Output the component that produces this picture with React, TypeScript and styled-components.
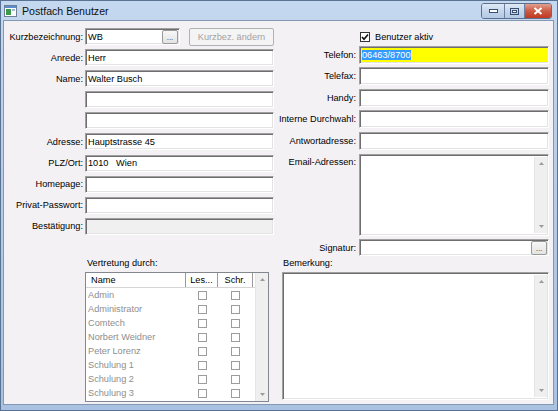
import styled, { createGlobalStyle, css } from "styled-components";

const GlobalStyle = createGlobalStyle`
  html, body { margin: 0; padding: 0; overflow: hidden; }
  body {
    font-family: "Liberation Sans", Arial, sans-serif;
    font-size: 9.2px;
    color: #000;
  }
  * { box-sizing: border-box; }
`

const sunken = css`
  border: 1px solid;
  border-color: #a0a0a0 #ffffff #ffffff #a0a0a0;
  box-shadow: inset 1px 1px 0 #6e6e6e, inset -1px -1px 0 #e3e3e3;
`

const Window = styled.div`
  width: 558px;
  height: 411px;
  display: flex;
  flex-direction: column;
  background: linear-gradient(#c4d8ef, #b7cde8 40%, #a9c2e2);
  border: 1px solid #5a7394;
`

const TitleBar = styled.div`
  height: 19px;
  display: flex;
  align-items: center;
  padding: 0 3px 0 3px;
`

const WinIcon = () => (
  <svg width="13" height="12" viewBox="0 0 13 12" style={{ marginRight: 5 }}>
    <rect x="0.5" y="0.5" width="12" height="11" fill="#fff" stroke="#6f7f95" />
    <rect x="1" y="1" width="11" height="2" fill="#5d8ccf" />
    <rect x="2" y="4" width="5" height="6" fill="#3c9a4a" />
    <rect x="8" y="4" width="3" height="2" fill="#9fb6d4" />
  </svg>
)

const Title = styled.span`
  font-size: 10.6px;
  color: #101010;
  flex: 1;
`

const CaptionGroup = styled.div`
  display: flex;
  align-self: flex-start;
  margin-top: 2px;
  margin-right: 2px;
  border: 1px solid #5c6f8c;
  border-radius: 3px;
  overflow: hidden;
`

const CaptionButton = styled.div<{ $w: number; $close?: boolean }>`
  width: ${(p) => p.$w}px;
  height: 14px;
  display: flex;
  align-items: center;
  justify-content: center;
  background: ${(p) =>
    p.$close
      ? "linear-gradient(#e3a08f, #cc5a44 50%, #c0391f)"
      : "linear-gradient(#dfe9f5, #c5d6ec 50%, #b3c8e4)"};
  & + & {
    border-left: 1px solid #6d819f;
  }
`

const Client = styled.div`
  flex: 1;
  margin: 0 3px 5px 2px;
  background: #f4f1f4;
  border: 1px solid #8498b3;
  display: grid;
  grid-template-columns: 274px 1fr;
  grid-template-rows: 236px 1fr;
`

const LeftForm = styled.div`
  padding-top: 7px;
  display: grid;
  grid-template-columns: 79px 189px;
  column-gap: 2px;
  grid-auto-rows: 17px;
  row-gap: 4.1px;
  align-items: center;
`

const RightForm = styled.div`
  padding-top: 6px;
  display: grid;
  grid-template-columns: 78px 190px;
  column-gap: 3px;
  grid-template-rows: 15px 18px 18px 18px 18px 18px 82px 17px;
  row-gap: 3.6px;
  align-items: center;
`

const Label = styled.div<{ $top?: boolean }>`
  text-align: right;
  white-space: nowrap;
  align-self: ${(p) => (p.$top ? "start" : "center")};
  padding-top: ${(p) => (p.$top ? "3px" : "0")};
`

const Field = styled.div<{ $bg?: string }>`
  ${sunken};
  height: 100%;
  background: ${(p) => p.$bg || "#fff"};
  display: flex;
  align-items: center;
  padding-left: 2px;
  white-space: pre;
  position: relative;
`

const Selected = styled.span`
  background: #3399ff;
  color: #fff;
`

const KurzRow = styled.div`
  display: flex;
  align-items: center;
  height: 100%;
  gap: 9px;
`

const KurzField = styled(Field)`
  width: 95px;
  flex: none;
  padding-right: 1px;
  justify-content: space-between;
`

const DotsButton = styled.div`
  width: 16px;
  height: 14px;
  border: 1px solid #9a9a9a;
  border-radius: 2px;
  background: linear-gradient(#f7f7f7, #e3e3e3);
  display: flex;
  align-items: flex-end;
  justify-content: center;
  font-size: 8px;
  line-height: 10px;
  color: #333;
`

const PushButton = styled.div`
  flex: 1;
  height: 18px;
  border: 1px solid #adb2b5;
  border-radius: 2px;
  background: #f4f4f4;
  color: #a3a3a3;
  display: flex;
  align-items: center;
  justify-content: center;
`

const CheckRow = styled.div`
  grid-column: 2;
  align-self: end;
  display: flex;
  align-items: center;
  gap: 5px;
  padding-left: 1px;
`

const CheckBox = styled.div<{ $light?: boolean }>`
  width: ${(p) => (p.$light ? 9 : 10)}px;
  height: ${(p) => (p.$light ? 9 : 10)}px;
  background: #fff;
  border: 1px solid ${(p) => (p.$light ? "#9c9c9c" : "#333")};
  display: flex;
  align-items: center;
  justify-content: center;
`

const Scroll = styled.div`
  width: 13px;
  align-self: stretch;
  background: #f0efef;
  border-left: 1px solid #e6e6e6;
  display: flex;
  flex-direction: column;
  justify-content: space-between;
  align-items: center;
  padding: 5px 0;
  flex: none;
`

const Arrow = ({ down }: { down?: boolean }) => (
  <svg width="5" height="3" viewBox="0 0 5 3">
    <path d={down ? "M0 0H5L2.5 3Z" : "M0 3H5L2.5 0Z"} fill="#9a9a9a" />
  </svg>
)

const ScrollBar = () => (
  <Scroll>
    <Arrow />
    <Arrow down />
  </Scroll>
)

const Memo = styled(Field)`
  align-items: stretch;
  justify-content: flex-end;
  padding: 2px 1px 2px 0;
`

const SigField = styled(Field)`
  justify-content: flex-end;
  padding-right: 1px;
`

const BottomCell = styled.div<{ $left: number; $width: number }>`
  padding-left: ${(p) => p.$left}px;
  display: flex;
  flex-direction: column;
  & > *:last-child {
    width: ${(p) => p.$width}px;
  }
`

const SectionLabel = styled.div<{ $indent: number }>`
  height: 15px;
  line-height: 13px;
  padding-left: ${(p) => p.$indent}px;
`

const ListView = styled.div`
  height: 130px;
  border: 1px solid #828790;
  background: #fff;
  display: flex;
`

const ListBody = styled.div`
  flex: 1;
  display: flex;
  flex-direction: column;
`

const ListRow = styled.div<{ $head?: boolean }>`
  height: 14px;
  display: grid;
  grid-template-columns: 100px 32px 35px 1fr;
  align-items: stretch;
  color: ${(p) => (p.$head ? "#000" : "#8e8e8e")};
  ${(p) =>
    p.$head &&
    css`
      height: 15px;
      border-bottom: 1px solid #d5d5d5;
      & > div:not(:last-child) {
        border-right: 1px solid #9a9a9a;
      }
    `}
`

const Cell = styled.div<{ $center?: boolean }>`
  display: flex;
  align-items: center;
  justify-content: ${(p) => (p.$center ? "center" : "flex-start")};
  padding-left: ${(p) => (p.$center ? "0" : "2px")};
  white-space: nowrap;
  overflow: hidden;
`

const HeadCell = styled(Cell)`
  padding-left: ${(p) => (p.$center ? "0" : "5px")};
`

const BigMemo = styled.div`
  ${sunken};
  height: 128px;
  background: #fff;
  display: flex;
  justify-content: flex-end;
  padding: 2px 1px 2px 0;
`

const leftRows: [string, string, string?][] = [
  ["Anrede:", "Herr"],
  ["Name:", "Walter Busch"],
  ["", ""],
  ["", ""],
  ["Adresse:", "Hauptstrasse 45"],
  ["PLZ/Ort:", "1010   Wien"],
  ["Homepage:", ""],
  ["Privat-Passwort:", ""],
  ["Bestätigung:", "", "#f1f0f1"],
]

const people = [
  "Admin",
  "Administrator",
  "Comtech",
  "Norbert Weidner",
  "Peter Lorenz",
  "Schulung 1",
  "Schulung 2",
  "Schulung 3",
]

const App = () => {
  return (
    <>
      <GlobalStyle />
      <Window>
        <TitleBar>
          <WinIcon />
          <Title>Postfach Benutzer</Title>
          <CaptionGroup>
            <CaptionButton $w={22}>
              <svg width="9" height="4"><rect x="0.5" y="0.5" width="8" height="3" fill="#fff" stroke="#3a4f6e" /></svg>
            </CaptionButton>
            <CaptionButton $w={20}>
              <svg width="9" height="7"><rect x="0.5" y="0.5" width="8" height="6" fill="none" stroke="#3a4f6e" /><rect x="2.5" y="2.5" width="4" height="2" fill="#fff" stroke="#3a4f6e" /></svg>
            </CaptionButton>
            <CaptionButton $w={27} $close>
              <svg width="10" height="8" viewBox="0 0 10 8">
                <path d="M1.5 1L8.5 7M8.5 1L1.5 7" stroke="#fff" strokeWidth="2" />
              </svg>
            </CaptionButton>
          </CaptionGroup>
        </TitleBar>
        <Client>
          <LeftForm>
            <Label>Kurzbezeichnung:</Label>
            <KurzRow>
              <KurzField>
                WB
                <DotsButton>...</DotsButton>
              </KurzField>
              <PushButton>Kurzbez. ändern</PushButton>
            </KurzRow>
            {leftRows.map(([label, value, bg], i) => [
              <Label key={`l${i}`}>{label}</Label>,
              <Field key={`f${i}`} $bg={bg}>{value}</Field>,
            ])}
          </LeftForm>
          <RightForm>
            <CheckRow>
              <CheckBox>
                <svg width="8" height="8" viewBox="0 0 8 8">
                  <path d="M1 4L3 6.3L7 1.5" fill="none" stroke="#111" strokeWidth="1.6" />
                </svg>
              </CheckBox>
              Benutzer aktiv
            </CheckRow>
            <Label>Telefon:</Label>
            <Field $bg="#ffff00">
              <Selected>06463/8700</Selected>
            </Field>
            <Label>Telefax:</Label>
            <Field />
            <Label>Handy:</Label>
            <Field />
            <Label>Interne Durchwahl:</Label>
            <Field />
            <Label>Antwortadresse:</Label>
            <Field />
            <Label $top>Email-Adressen:</Label>
            <Memo>
              <ScrollBar />
            </Memo>
            <Label>Signatur:</Label>
            <SigField>
              <DotsButton>...</DotsButton>
            </SigField>
          </RightForm>
          <BottomCell $left={81} $width={184}>
            <SectionLabel $indent={2}>Vertretung durch:</SectionLabel>
            <ListView>
              <ListBody>
                <ListRow $head>
                  <HeadCell>Name</HeadCell>
                  <HeadCell $center>Les...</HeadCell>
                  <HeadCell $center>Schr.</HeadCell>
                  <Cell />
                </ListRow>
                {people.map((name) => (
                  <ListRow key={name}>
                    <Cell>{name}</Cell>
                    <Cell $center>
                      <CheckBox $light />
                    </Cell>
                    <Cell $center>
                      <CheckBox $light />
                    </Cell>
                    <Cell />
                  </ListRow>
                ))}
              </ListBody>
              <ScrollBar />
            </ListView>
          </BottomCell>
          <BottomCell $left={4} $width={267}>
            <SectionLabel $indent={1}>Bemerkung:</SectionLabel>
            <BigMemo>
              <ScrollBar />
            </BigMemo>
          </BottomCell>
        </Client>
      </Window>
    </>
  )
}

export default App
